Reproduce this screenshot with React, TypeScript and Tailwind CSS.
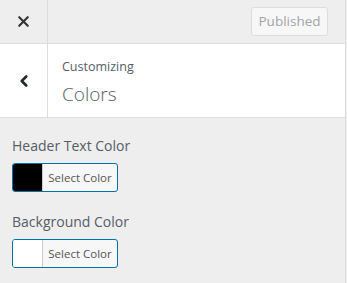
import { X, ChevronLeft } from "lucide-react"

function ColorButton({ swatch }: { swatch: string }) {
  return (
    <button className="flex h-[29px] w-[106px] overflow-hidden rounded-[3px] border border-[#0073aa] bg-[#f7f7f7] p-0">
      <span className={`h-full w-[30px] border-r border-[#cccccc] ${swatch}`} />
      <span className="flex flex-1 items-center justify-center text-[11.5px] text-[#555555]">Select Color</span>
    </button>
  )
}

export default function App() {
  return (
    <div
      className="h-[283px] w-[347px] overflow-hidden bg-[#eeeeee] text-[#555d66]"
      style={{ fontFamily: '"Open Sans", "Noto Sans", sans-serif' }}
    >
      <div className="w-[346px] border-r border-[#dddddd]">
        {/* top bar */}
        <div className="flex h-[44px] border-b border-[#dddddd]">
          <div className="flex w-[48px] items-center justify-center border-r border-[#dddddd]">
            <X className="h-[17px] w-[17px] text-[#333333]" strokeWidth={3} />
          </div>
          <div className="flex flex-1 items-start justify-end pr-[17px] pt-[7px]">
            <div className="flex h-[29px] w-[77px] items-center justify-center rounded-[3px] border border-[#dddddd] bg-[#f7f7f7] text-[13.5px] text-[#a0a5aa]">
              Published
            </div>
          </div>
        </div>

        {/* section header */}
        <div className="flex h-[74px] border-b border-[#dddddd] bg-white">
          <div className="flex w-[48px] items-center justify-center border-r border-[#dddddd]">
            <ChevronLeft className="h-[18px] w-[18px] text-[#23282d]" strokeWidth={3.5} />
          </div>
          <div className="flex flex-col pl-[14px] pt-[14px]">
            <span className="text-[12.5px] leading-[18px] text-[#555d66]">Customizing</span>
            <span className="mt-[5px] text-[19px] font-light leading-[26px] text-[#555d66]">Colors</span>
          </div>
        </div>

        {/* controls */}
        <div className="flex flex-col px-[12px] pt-[18px]">
          <div className="text-[14px] leading-[20px] text-[#555d66]">Header Text Color</div>
          <div className="mt-[7px]">
            <ColorButton swatch="bg-black" />
          </div>
          <div className="mt-[20px] text-[14px] leading-[20px] text-[#555d66]">Background Color</div>
          <div className="mt-[7px] pb-[20px]">
            <ColorButton swatch="bg-white" />
          </div>
        </div>
      </div>
    </div>
  )
}
